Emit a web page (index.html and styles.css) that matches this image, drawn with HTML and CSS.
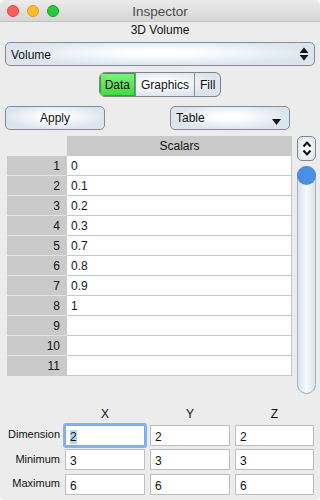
FILE: index.html
```html
<!DOCTYPE html>
<html>
<head>
<meta charset="utf-8">
<link rel="stylesheet" href="styles.css">
</head>
<body>
<div class="window">
  <div class="titlebar">
    <div class="lights">
      <span class="light red"></span>
      <span class="light yellow"></span>
      <span class="light green"></span>
    </div>
    <div class="title">Inspector</div>
    <div></div>
  </div>
  <div class="subtitle">3D Volume</div>
  <div class="popup main-popup">
    <span>Volume</span>
    <svg class="updown" width="10" height="14" viewBox="0 0 10 14"><path d="M5 0.5 L9.5 6 H0.5 Z M5 13.5 L9.5 8 H0.5 Z" fill="#111"/></svg>
  </div>
  <div class="seg-wrap">
    <div class="segmented">
      <span class="seg active">Data</span>
      <span class="seg">Graphics</span>
      <span class="seg">Fill</span>
    </div>
  </div>
  <div class="actions">
    <div class="button apply">Apply</div>
    <div class="popup table-popup">
      <span>Table</span>
      <svg class="down" width="9" height="6" viewBox="0 0 9 6"><path d="M0 0 H9 L4.5 6 Z" fill="#111"/></svg>
    </div>
  </div>
  <div class="table-area">
    <div class="table">
      <div class="corner"></div><div class="head">Scalars</div>
      <div class="num">1</div><div class="cell">0</div>
      <div class="num">2</div><div class="cell">0.1</div>
      <div class="num">3</div><div class="cell">0.2</div>
      <div class="num">4</div><div class="cell">0.3</div>
      <div class="num">5</div><div class="cell">0.7</div>
      <div class="num">6</div><div class="cell">0.8</div>
      <div class="num">7</div><div class="cell">0.9</div>
      <div class="num">8</div><div class="cell">1</div>
      <div class="num">9</div><div class="cell"></div>
      <div class="num">10</div><div class="cell"></div>
      <div class="num">11</div><div class="cell"></div>
    </div>
    <div class="scroller">
      <div class="stepper">
        <svg width="12" height="19" viewBox="0 0 12 19"><path d="M2.5 7.5 L6 3.5 L9.5 7.5 M2.5 11.5 L6 15.5 L9.5 11.5" fill="none" stroke="#111" stroke-width="2" stroke-linejoin="round"/></svg>
      </div>
      <div class="slider"><div class="knob"></div></div>
    </div>
  </div>
  <div class="dims">
    <div></div><div class="axis">X</div><div class="axis">Y</div><div class="axis">Z</div>
    <div class="lbl">Dimension</div>
    <div class="field focus"><span class="sel">2</span></div>
    <div class="field">2</div>
    <div class="field">2</div>
    <div class="lbl">Minimum</div>
    <div class="field">3</div>
    <div class="field">3</div>
    <div class="field">3</div>
    <div class="lbl">Maximum</div>
    <div class="field">6</div>
    <div class="field">6</div>
    <div class="field">6</div>
  </div>
</div>
</body>
</html>
```
FILE: styles.css
```css
html, body {
  margin: 0;
  padding: 0;
  background: #ffffff;
}
body {
  width: 320px;
  height: 500px;
  font-family: "Liberation Sans", Arial, sans-serif;
  font-size: 12px;
  color: #111;
}
.window {
  width: 320px;
  height: 500px;
  background: #ececec;
  border-radius: 5px;
  overflow: hidden;
  box-sizing: border-box;
}
.titlebar {
  height: 21px;
  border-bottom: 1px solid #c2c2c2;
  background: linear-gradient(#ebebeb, #d5d5d5);
  display: grid;
  grid-template-columns: 1fr auto 1fr;
  align-items: center;
}
.lights {
  display: flex;
  gap: 8px;
  padding-left: 7px;
  padding-top: 1px;
}
.light {
  width: 12px;
  height: 12px;
  border-radius: 50%;
  box-sizing: border-box;
}
.red { background: #fc5f57; border: 1px solid #e2463f; }
.yellow { background: #fdbc2e; border: 1px solid #e09e1a; }
.green { background: #28c840; border: 1px solid #14a524; }
.title {
  font-size: 13.5px;
  color: #4b4b4b;
  padding-top: 1px;
}
.subtitle {
  text-align: center;
  height: 20px;
  line-height: 17px;
  color: #111;
}
.popup, .button {
  box-sizing: border-box;
  border: 1px solid #848b93;
  border-radius: 5px;
  background: radial-gradient(ellipse farthest-side at 50% 45%, #ffffff 20%, #dce5ee 100%);
  display: flex;
  align-items: center;
}
.main-popup {
  margin: 0 5px;
  height: 24px;
  padding: 0 5px 0 5px;
  justify-content: space-between;
}
.main-popup span { padding-top: 1px; }
.seg-wrap {
  display: flex;
  justify-content: center;
  margin-top: 6px;
}
.segmented {
  display: flex;
  height: 25px;
  border: 1px solid #7d848b;
  border-radius: 6px;
  overflow: hidden;
  box-sizing: border-box;
  background: radial-gradient(ellipse farthest-side at 50% 45%, #ffffff 20%, #dce5ee 100%);
}
.seg {
  display: flex;
  align-items: center;
  padding: 0 5px;
  border-left: 1px solid #8a9299;
}
.seg:first-child { border-left: none; }
.seg.active {
  background: linear-gradient(#7ef07e, #41d941);
  box-shadow: inset 0 0 0 1px #2faa2f;
  padding: 0 5px 0 5px;
}
.actions {
  display: flex;
  align-items: center;
  gap: 65px;
  margin: 9px 0 0 5px;
}
.apply {
  width: 100px;
  height: 24px;
  justify-content: center;
}
.table-popup {
  width: 120px;
  height: 24px;
  padding: 0 8px 0 5px;
  justify-content: space-between;
}
.table-popup .down { margin-top: 8px; }
.table-area {
  display: flex;
  margin: 6px 0 0 7px;
  gap: 5px;
  align-items: flex-start;
}
.table {
  display: grid;
  grid-template-columns: 60px 225px;
}
.corner { height: 20px; }
.head {
  height: 20px;
  background: #c9c9c9;
  display: flex;
  align-items: center;
  justify-content: center;
}
.num, .cell {
  height: 19px;
  display: flex;
  align-items: center;
}
.num {
  background: #cacaca;
  border-bottom: 1px solid #e2e2e2;
  justify-content: flex-end;
  padding-right: 7px;
}
.cell {
  background: #ffffff;
  border-bottom: 1px solid #c8c8c8;
  border-right: 1px solid #c8c8c8;
  padding-left: 4px;
  color: #101828;
}
.num:nth-last-child(2) { border-bottom-color: #cacaca; }
.scroller {
  display: flex;
  flex-direction: column;
  gap: 5px;
  width: 19px;
}
.stepper {
  height: 25px;
  box-sizing: border-box;
  border: 1px solid #7f868d;
  border-radius: 5px;
  background: radial-gradient(ellipse farthest-side, #ffffff 30%, #e2e9f0 100%);
  display: flex;
  align-items: center;
  justify-content: center;
}
.slider {
  height: 228px;
  box-sizing: border-box;
  border: 1px solid #a9b1b9;
  border-radius: 10px;
  background: linear-gradient(to right, #d8e2ed, #f7f9fc 50%, #d8e2ed);
  position: relative;
}
.knob {
  position: absolute;
  left: -1px;
  top: -1px;
  width: 19px;
  height: 19px;
  border-radius: 50%;
  background: #4a8ee6;
}
.dims {
  display: grid;
  grid-template-columns: 60px 80px 80px 79px;
  grid-template-rows: 14px 21px 21px 21px;
  column-gap: 5px;
  row-gap: 3.5px;
  margin-top: 13px;
}
.axis {
  text-align: center;
  font-size: 12px;
  line-height: 14px;
}
.lbl {
  font-size: 11px;
  text-align: right;
  align-self: center;
  padding-bottom: 2px;
}
.field {
  box-sizing: border-box;
  background: #fff;
  border: 1px solid #bdbdbd;
  padding: 3px 0 0 4px;
  font-size: 12px;
  line-height: 16px;
}
.field.focus {
  border-color: #7ea8e0;
  box-shadow: 0 0 0 2px #86b2ee;
  border-radius: 1px;
}
.sel {
  background: #b4d6fb;
}
```
